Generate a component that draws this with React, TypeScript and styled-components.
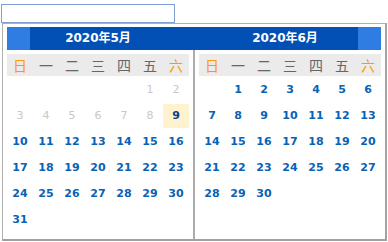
import React from "react";
import styled, { createGlobalStyle } from "styled-components";

const Global = createGlobalStyle`
  html, body { margin: 0; padding: 0; background: #ffffff; }
  body { font-family: "DejaVu Sans", "Noto Sans CJK SC", sans-serif; }
`;

const Page = styled.div`
  padding: 4px 0 0 1px;
`;

const Field = styled.input`
  display: block;
  box-sizing: border-box;
  width: 174px;
  height: 19px;
  margin: 0;
  padding: 0 3px;
  border: 1px solid #7f9fd4;
  outline: none;
  background: #fff;
`;

const Popup = styled.div`
  box-sizing: border-box;
  width: 385px;
  margin-left: 1px;
  padding: 3px 4px 0 4px;
  background: #fff;
  border-top: 1px solid #b0b0b0;
  border-left: 1px solid #b0b0b0;
  border-right: 2px solid #a2a2a2;
  border-bottom: 2px solid #a2a2a2;
`;

const Header = styled.div`
  position: relative;
  display: grid;
  grid-template-columns: 182px 1fr;
  height: 23px;
  background: #0250b6;
`;

const Title = styled.div`
  text-align: center;
  line-height: 23px;
  color: #fff;
  font-size: 12px;
  font-weight: bold;
  font-family: "DejaVu Sans", "Noto Sans CJK SC", sans-serif;
`;

const NavButton = styled.div<{ $side: "left" | "right" }>`
  position: absolute;
  top: 0;
  ${(p) => (p.$side === "left" ? "left: 0;" : "right: 0;")}
  width: 23px;
  height: 23px;
  background: #2f7ce3;
`;

const Body = styled.div`
  display: flex;
  align-items: stretch;
`;

const Month = styled.div`
  width: 182px;
  padding: 4px 0 7px 0;
`;

const Divider = styled.div`
  width: 2px;
  margin: 0 4px;
  background: #ababab;
`;

const WeekRow = styled.div`
  display: grid;
  grid-template-columns: repeat(7, 26px);
  height: 22px;
  background: #ebebeb;
`;

const WeekDay = styled.div<{ $weekend: boolean }>`
  text-align: center;
  line-height: 22px;
  font-size: 14px;
  font-family: "Noto Sans CJK SC", sans-serif;
  color: ${(p) => (p.$weekend ? "#ff9900" : "#666666")};
`;

const Days = styled.div`
  display: grid;
  grid-template-columns: repeat(7, 26px);
  grid-auto-rows: 24px;
  row-gap: 2px;
  margin-top: 2px;
`;

type Kind = "empty" | "off" | "today" | "on";

const Day = styled.div<{ $kind: Kind }>`
  text-align: center;
  line-height: 24px;
  font-size: 11px;
  font-family: "DejaVu Sans", sans-serif;
  font-weight: ${(p) => (p.$kind === "off" ? "normal" : "bold")};
  color: ${(p) =>
    p.$kind === "off" ? "#c8c8c8" : p.$kind === "today" ? "#0a3f8c" : "#0862b5"};
  background: ${(p) => (p.$kind === "today" ? "#fff3cf" : "transparent")};
`;

const weekNames = ["日", "一", "二", "三", "四", "五", "六"];

type Cell = { n: number | null; kind: Kind };

function buildMonth(offset: number, count: number, off: number, today: number): Cell[] {
  const cells: Cell[] = [];
  for (let i = 0; i < offset; i++) cells.push({ n: null, kind: "empty" });
  for (let d = 1; d <= count; d++) {
    let kind: Kind = "on";
    if (d <= off) kind = "off";
    else if (d === today) kind = "today";
    cells.push({ n: d, kind });
  }
  return cells;
}

const months = [
  { cells: buildMonth(5, 31, 8, 9) },
  { cells: buildMonth(1, 30, 0, -1) },
];

function MonthView({ cells }: { cells: Cell[] }) {
  return (
    <Month>
      <WeekRow>
        {weekNames.map((w, i) => (
          <WeekDay key={w} $weekend={i === 0 || i === 6}>
            {w}
          </WeekDay>
        ))}
      </WeekRow>
      <Days>
        {cells.map((c, i) => (
          <Day key={i} $kind={c.kind}>
            {c.n ?? ""}
          </Day>
        ))}
      </Days>
    </Month>
  );
}

export default function App() {
  return (
    <>
      <Global />
      <Page>
        <Field type="text" />
        <Popup>
          <Header>
            <NavButton $side="left" />
            <Title>2020年5月</Title>
            <Title>2020年6月</Title>
            <NavButton $side="right" />
          </Header>
          <Body>
            <MonthView cells={months[0].cells} />
            <Divider />
            <MonthView cells={months[1].cells} />
          </Body>
        </Popup>
      </Page>
    </>
  );
}
